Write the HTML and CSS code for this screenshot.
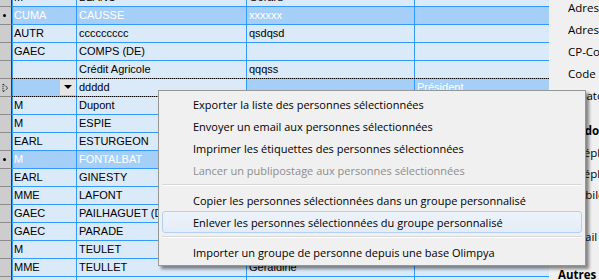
FILE: index.html
```html
<!DOCTYPE html>
<html lang="fr">
<head>
    <meta charset="utf-8">
    <title>Personnes</title>
    <link rel="stylesheet" href="styles.css">
</head>
<body>
    <div class="screen">
        <div class="grid">
            <div class="row first">
                <div class="rh"></div>
                <div class="c c1">M</div><div class="c c2">BLANC</div><div class="c c3">Gérard</div><div class="c c4"></div>
            </div>
            <div class="row sel">
                <div class="rh"><span class="dot"></span></div>
                <div class="c c1">CUMA</div><div class="c c2">CAUSSE</div><div class="c c3">xxxxxx</div><div class="c c4"></div>
            </div>
            <div class="row">
                <div class="rh"></div>
                <div class="c c1">AUTR</div><div class="c c2">ccccccccc</div><div class="c c3">qsdqsd</div><div class="c c4"></div>
            </div>
            <div class="row">
                <div class="rh"></div>
                <div class="c c1">GAEC</div><div class="c c2">COMPS (DE)</div><div class="c c3"></div><div class="c c4"></div>
            </div>
            <div class="row">
                <div class="rh"></div>
                <div class="c c1"></div><div class="c c2">Crédit Agricole</div><div class="c c3">qqqss</div><div class="c c4"></div>
            </div>
            <div class="row cur">
                <div class="rh">
                    <svg class="arrow" width="8" height="10" viewBox="0 0 8 10"><path d="M1 1 L6 5 L1 9 Z" fill="none" stroke="#000" stroke-width="1" stroke-dasharray="1 1"/></svg>
                </div>
                <div class="c c1 edit"><span class="drop"></span></div><div class="c c2 focus">ddddd</div><div class="c c3"></div><div class="c c4">Président</div>
            </div>
            <div class="row">
                <div class="rh"></div>
                <div class="c c1">M</div><div class="c c2">Dupont</div><div class="c c3"></div><div class="c c4"></div>
            </div>
            <div class="row">
                <div class="rh"></div>
                <div class="c c1">M</div><div class="c c2">ESPIE</div><div class="c c3"></div><div class="c c4"></div>
            </div>
            <div class="row">
                <div class="rh"></div>
                <div class="c c1">EARL</div><div class="c c2">ESTURGEON</div><div class="c c3"></div><div class="c c4"></div>
            </div>
            <div class="row sel">
                <div class="rh"><span class="dot"></span></div>
                <div class="c c1">M</div><div class="c c2">FONTALBAT</div><div class="c c3"></div><div class="c c4"></div>
            </div>
            <div class="row">
                <div class="rh"></div>
                <div class="c c1">EARL</div><div class="c c2">GINESTY</div><div class="c c3"></div><div class="c c4"></div>
            </div>
            <div class="row">
                <div class="rh"></div>
                <div class="c c1">MME</div><div class="c c2">LAFONT</div><div class="c c3"></div><div class="c c4"></div>
            </div>
            <div class="row">
                <div class="rh"></div>
                <div class="c c1">GAEC</div><div class="c c2">PAILHAGUET (DE)</div><div class="c c3"></div><div class="c c4"></div>
            </div>
            <div class="row">
                <div class="rh"></div>
                <div class="c c1">GAEC</div><div class="c c2">PARADE</div><div class="c c3"></div><div class="c c4"></div>
            </div>
            <div class="row">
                <div class="rh"></div>
                <div class="c c1">M</div><div class="c c2">TEULET</div><div class="c c3"></div><div class="c c4"></div>
            </div>
            <div class="row">
                <div class="rh"></div>
                <div class="c c1">MME</div><div class="c c2">TEULLET</div><div class="c c3">Géraldine</div><div class="c c4"></div>
            </div>
            <div class="row">
                <div class="rh"></div>
                <div class="c c1"></div><div class="c c2"></div><div class="c c3"></div><div class="c c4"></div>
            </div>
        </div>

        <div class="side">
            <div class="lab">Adresse 1</div>
            <div class="lab">Adresse 2</div>
            <div class="lab">CP-Commune</div>
            <div class="lab">Code INSEE</div>
            <div class="lab">Creator</div>
            <div class="head">Coordonnées</div>
            <div class="lab sm">Téléphone</div>
            <div class="lab sm">Téléphone 2</div>
            <div class="lab sm">Mobile</div>
            <div class="lab sm">Fax</div>
            <div class="lab sm">Email</div>
            <div class="head last">Autres</div>
        </div>
    </div>

    <div class="menu">
        <div class="item">Exporter la liste des personnes sélectionnées</div>
        <div class="item">Envoyer un email aux personnes sélectionnées</div>
        <div class="item">Imprimer les étiquettes des personnes sélectionnées</div>
        <div class="item off">Lancer un publipostage aux personnes sélectionnées</div>
        <div class="sep"></div>
        <div class="item">Copier les personnes sélectionnées dans un groupe personnalisé</div>
        <div class="item hover">Enlever les personnes sélectionnées du groupe personnalisé</div>
        <div class="sep"></div>
        <div class="item">Importer un groupe de personne depuis une base Olimpya</div>
    </div>
</body>
</html>
```

FILE: styles.css
```css
* {
    box-sizing: border-box;
}

body {
    margin: 0;
    width: 599px;
    height: 280px;
    overflow: hidden;
    position: relative;
    background: #f0f0f0;
    font-family: 'Liberation Sans', Arial, sans-serif;
}

.screen {
    display: flex;
    height: 280px;
    overflow: hidden;
}

/* grid */

.grid {
    width: 549px;
    height: 280px;
    flex-shrink: 0;
    display: flex;
    flex-direction: column;
    overflow: hidden;
    font-size: 11px;
    background: #dbeaf9;
}

.row {
    display: flex;
    height: 18px;
    flex-shrink: 0;
    position: relative;
}

.row.first {
    margin-top: -11px;
}

.rh {
    width: 12px;
    flex-shrink: 0;
    background: #cdcdcd;
    border-right: 1px solid #3c3c3c;
    border-bottom: 1px solid #8c8c8c;
    display: flex;
    align-items: center;
    padding-left: 2px;
}

.dot {
    width: 3px;
    height: 3px;
    background: #000;
    border-radius: 50%;
    margin-left: 1px;
}

.c {
    border-left: 1px solid #3399ff;
    border-bottom: 1px solid #3399ff;
    padding-left: 2px;
    line-height: 17px;
    white-space: nowrap;
    overflow: hidden;
    color: #000;
}

.c1 { width: 64px; padding-left: 1px; }
.c2 { width: 170px; }
.c3 { width: 168px; }
.c4 { width: 135px; }

.sel .c,
.cur .c {
    background: #a6cff8;
    color: #fff;
}

.cur .c.focus {
    background: #dbeaf9;
    color: #000;
}

.cur::after {
    content: '';
    position: absolute;
    left: 12px;
    right: 0;
    top: -1px;
    bottom: 0;
    border-top: 1px dotted #000;
    border-bottom: 1px dotted #000;
}

.edit {
    display: flex;
    justify-content: flex-end;
    align-items: center;
    padding-right: 0;
}

.drop {
    width: 16px;
    height: 15px;
    background: #e6e6e6;
    display: flex;
    align-items: center;
    justify-content: center;
    margin-top: -1px;
}

.drop::before {
    content: '';
    border-left: 4px solid transparent;
    border-right: 4px solid transparent;
    border-top: 4px solid #000;
}

/* side panel */

.side {
    flex: 1;
    overflow: hidden;
    display: flex;
    flex-direction: column;
    padding-left: 19px;
    margin-top: -3px;
    font-family: 'Open Sans', sans-serif;
    font-size: 11.5px;
    color: #000;
    white-space: nowrap;
}

.lab {
    height: 22px;
    line-height: 22px;
    flex-shrink: 0;
}

.lab.sm {
    height: 21px;
    line-height: 21px;
}

.head {
    height: 22px;
    line-height: 22px;
    flex-shrink: 0;
    font-weight: bold;
    margin-left: -10px;
    margin-top: 13px;
}

.head.last {
    margin-top: 17px;
}

/* context menu */

.menu {
    position: absolute;
    left: 158px;
    top: 90px;
    width: 428px;
    padding: 2px;
    background: #f0f0f0;
    border: 1px solid #979797;
    box-shadow: 3px 3px 3px rgba(0, 0, 0, 0.45);
    font-family: 'Open Sans', sans-serif;
    font-size: 11px;
    color: #000;
}

.item {
    height: 22px;
    line-height: 22px;
    padding-left: 30px;
    margin: 0 1px;
    border: 1px solid transparent;
    border-radius: 3px;
    white-space: nowrap;
}

.item.off {
    color: #8d8d8d;
}

.item.hover {
    background: linear-gradient(#eef3fa, #e3ecf8);
    border-color: #b2d0f3;
}

.sep {
    height: 8px;
    margin: 0 1px;
    display: flex;
    flex-direction: column;
    justify-content: center;
}

.sep::before {
    content: '';
    height: 1px;
    background: #d7d7d7;
    border-bottom: 1px solid #fff;
    box-sizing: content-box;
}
```
